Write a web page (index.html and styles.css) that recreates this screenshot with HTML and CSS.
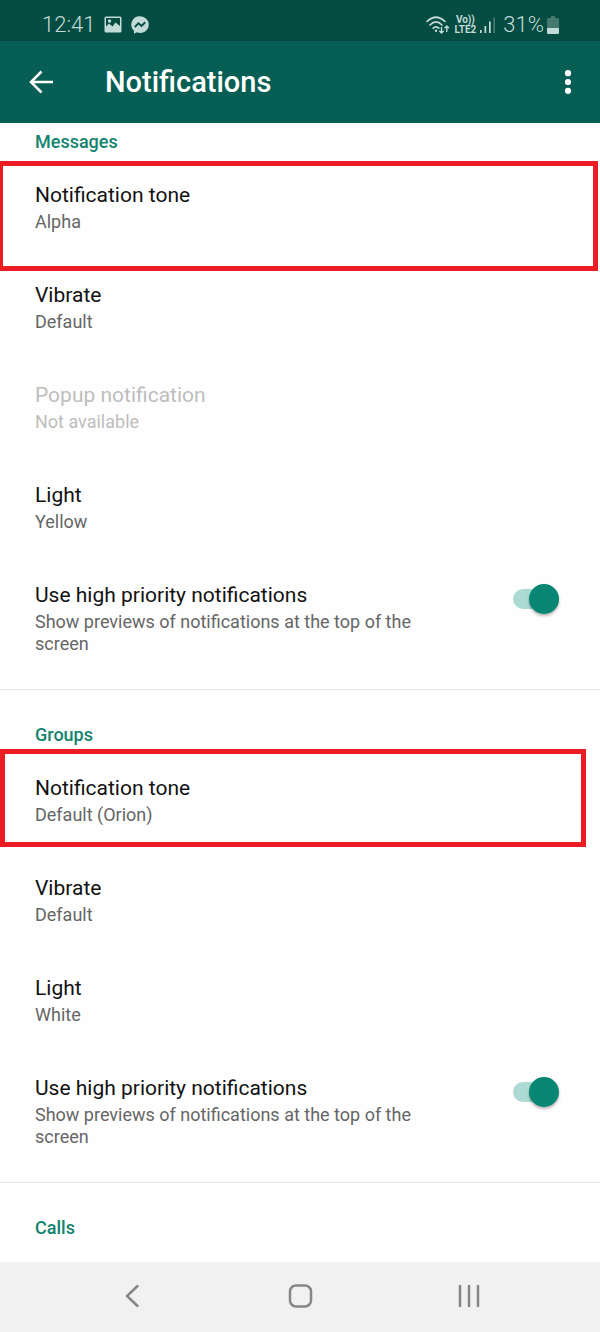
FILE: index.html
```html
<!DOCTYPE html>
<html lang="en">
<head>
    <meta charset="UTF-8">
    <meta name="viewport" content="width=device-width, initial-scale=1.0">
    <title>Notifications</title>
    <link rel="stylesheet" href="styles.css">
</head>
<body>
    <div class="status-bar">
        <div class="status-left">
            <span class="status-text">12:41</span>
            <svg width="18" height="18" viewBox="0 0 18 18" aria-hidden="true">
                <path fill="#c3dbd7" fill-rule="evenodd" d="M2 0.5h14q1.500 0 1.500 1.500v13q0 1.500-1.500 1.500H2Q.5 16.500.5 15V2Q.5.5 2 .5zM2 2v8.500l3-3 3.500 3 3-4L16 10V2z"/>
                <circle cx="5.500" cy="5" r="1.700" fill="#c3dbd7"/>
            </svg>
            <svg width="18" height="18" viewBox="0 0 18 18" aria-hidden="true">
                <path fill="#c3dbd7" d="M9 .3a8.700 8.300 0 1 1-3.200 16L3 17.700V15A8.500 8.500 0 0 1 9 .3z"/>
                <path fill="none" stroke="#054c42" stroke-width="1.900" d="M3.800 11l3.700-3.800 3 2.700 3.700-3.600"/>
            </svg>
        </div>
        <div class="status-right">
            <svg width="24" height="20" viewBox="0 0 24 20" fill="none" stroke="#c3dbd7" stroke-width="1.700" stroke-linecap="round" aria-hidden="true">
                <path d="M1 6.500q9-8.500 18 0M4 10q6-6 12 0M7.200 13.200q2.800-2.700 5.600 0"/>
                <circle cx="10" cy="15.800" r="1.200" fill="#c3dbd7" stroke="none"/>
                <path stroke-width="1.400" d="M15.500 12.500v5.500M13.700 16.300l1.800 1.800 1.800-1.800M20.800 16.500v-5.500M19 12.700l1.800-1.800 1.800 1.800"/>
            </svg>
            <span class="network"><span>Vo))</span><span>LTE2</span></span>
            <svg width="16" height="18" viewBox="0 0 16 18" fill="#c3dbd7" aria-hidden="true">
                <path d="M0 14h1.700v3H0zM4.500 10h1.700v7H4.500zM9 5.500h1.700V17H9z"/>
                <path fill="#44796f" d="M13.300 1.500H15V17h-1.700z"/>
            </svg>
            <span class="status-text battery-level">31%</span>
            <svg width="12" height="18" viewBox="0 0 12 18" aria-hidden="true">
                <path fill="#44796f" d="M4 0h4v2h2.500Q12 2 12 3.500V12H0V3.500Q0 2 1.500 2H4z"/>
                <path fill="#c3dbd7" d="M0 12h12v4.500q0 1.500-1.500 1.500h-9Q0 18 0 16.500z"/>
            </svg>
        </div>
    </div>

    <header class="app-bar">
        <button class="icon-button" type="button" aria-label="Back">
            <svg width="24" height="24" viewBox="0 0 24 24" fill="none" stroke="#fff" stroke-width="2.500" aria-hidden="true">
                <path d="M24 12H2M12.500 1.500L2 12l10.500 10.500"/>
            </svg>
        </button>
        <h1>Notifications</h1>
        <button class="icon-button" type="button" aria-label="More options">
            <svg width="24" height="24" viewBox="0 0 24 24" fill="#fff" aria-hidden="true">
                <circle cx="12" cy="3.200" r="3.100"/>
                <circle cx="12" cy="12" r="3.100"/>
                <circle cx="12" cy="20.800" r="3.100"/>
            </svg>
        </button>
    </header>

    <main>
        <section>
            <h2>Messages</h2>
            <div class="row highlight highlight-messages">
                <div class="row-text">
                    <h3>Notification tone</h3>
                    <p>Alpha</p>
                </div>
            </div>
            <div class="row">
                <div class="row-text">
                    <h3>Vibrate</h3>
                    <p>Default</p>
                </div>
            </div>
            <div class="row disabled">
                <div class="row-text">
                    <h3>Popup notification</h3>
                    <p>Not available</p>
                </div>
            </div>
            <div class="row">
                <div class="row-text">
                    <h3>Light</h3>
                    <p>Yellow</p>
                </div>
            </div>
            <div class="row">
                <label class="row-text" for="messagesPriority">
                    <span class="row-title">Use high priority notifications</span>
                    <span class="row-summary">Show previews of notifications at the top of the screen</span>
                </label>
                <input class="switch" type="checkbox" id="messagesPriority" checked>
            </div>
        </section>

        <section>
            <h2>Groups</h2>
            <div class="row highlight highlight-groups">
                <div class="row-text">
                    <h3>Notification tone</h3>
                    <p>Default (Orion)</p>
                </div>
            </div>
            <div class="row">
                <div class="row-text">
                    <h3>Vibrate</h3>
                    <p>Default</p>
                </div>
            </div>
            <div class="row">
                <div class="row-text">
                    <h3>Light</h3>
                    <p>White</p>
                </div>
            </div>
            <div class="row">
                <label class="row-text" for="groupsPriority">
                    <span class="row-title">Use high priority notifications</span>
                    <span class="row-summary">Show previews of notifications at the top of the screen</span>
                </label>
                <input class="switch" type="checkbox" id="groupsPriority" checked>
            </div>
        </section>

        <section>
            <h2>Calls</h2>
        </section>
    </main>

    <nav class="nav-bar">
        <button type="button" aria-label="Back">
            <svg width="26" height="26" viewBox="0 0 26 26" aria-hidden="true">
                <path d="M18.500 3L8 13l10.500 10"/>
            </svg>
        </button>
        <button type="button" aria-label="Home">
            <svg width="26" height="26" viewBox="0 0 26 26" aria-hidden="true">
                <rect x="3" y="2.500" width="21" height="21" rx="6"/>
            </svg>
        </button>
        <button type="button" aria-label="Recent apps">
            <svg width="26" height="26" viewBox="0 0 26 26" aria-hidden="true">
                <path d="M5 3v20M14 3v20M23 3v20"/>
            </svg>
        </button>
    </nav>
</body>
</html>
```
FILE: styles.css
```css
* {
    box-sizing: border-box;
}

body {
    display: flex;
    flex-direction: column;
    min-height: 100vh;
    margin: 0;
    background-color: #fefefe;
    font-family: Roboto, sans-serif;
    color: #121212;
}

h1, h2, h3, p {
    margin: 0;
    font-weight: 400;
}

button {
    padding: 0;
    border: none;
    background: none;
    cursor: pointer;
}

svg {
    display: block;
    flex: none;
}

/* Status bar */

.status-bar {
    display: flex;
    justify-content: space-between;
    height: 41px;
    padding: 8px 41px 0 42px;
    background-color: #054c42;
    color: #c3dbd7;
}

.status-left,
.status-right {
    display: flex;
    align-items: center;
}

.status-left {
    gap: 9px;
}

.status-right {
    gap: 3px;
}

.status-text {
    font-size: 22px;
    font-weight: 300;
    line-height: 24px;
}

.battery-level {
    padding-left: 4px;
}

.network {
    display: flex;
    flex-direction: column;
    align-items: center;
    padding: 0 1px;
    font-size: 10px;
    font-weight: 700;
    line-height: 10px;
}

/* App bar */

.app-bar {
    display: flex;
    align-items: center;
    height: 82px;
    padding: 0 20px 0 29px;
    background-color: #075e54;
}

.icon-button {
    flex: none;
}

.app-bar h1 {
    flex: 1;
    padding-left: 52px;
    color: #fff;
    font-size: 29px;
    font-weight: 500;
    line-height: 36px;
}

/* Settings list */

main {
    flex: 1;
}

section {
    padding: 34px 0 9px;
    border-top: 1px solid #e4e4e4;
}

section:first-child {
    padding-top: 8px;
    border-top: none;
}

section:last-child {
    padding-bottom: 0;
}

h2 {
    padding: 0 35px 5px;
    color: #12836c;
    font-size: 18px;
    font-weight: 500;
    line-height: 22px;
}

.row {
    display: flex;
    align-items: flex-start;
    gap: 48px;
    padding: 24px 41px 25px 35px;
}

.row-text {
    display: flex;
    flex: 1;
    flex-direction: column;
    gap: 3px;
}

.row h3,
.row-title {
    font-size: 21px;
    line-height: 26px;
}

.row p,
.row-summary {
    color: #666;
    font-size: 18px;
    line-height: 22px;
}

.row.disabled h3,
.row.disabled p {
    color: #bdbdbd;
}

/* Red frames drawn over the tone rows */

.highlight {
    position: relative;
}

.highlight::after {
    content: "";
    position: absolute;
    left: 0;
    border: 5px solid #ec1c24;
}

.highlight-messages::after {
    top: 3px;
    right: 2px;
    bottom: -13px;
    border-left-width: 3px;
}

.highlight-groups::after {
    top: -2px;
    right: 14px;
    bottom: 4px;
}

/* Switch */

.switch {
    appearance: none;
    display: flex;
    flex: none;
    align-items: center;
    width: 46px;
    height: 20px;
    margin: 7px 0 0;
    background-color: #addbd3;
    border-radius: 10px;
    cursor: pointer;
}

.switch::before {
    content: "";
    flex: none;
    width: 30px;
    height: 30px;
    border-radius: 50%;
    background-color: #078673;
    box-shadow: 0 2px 3px rgba(0, 0, 0, 0.3);
}

.switch:checked {
    justify-content: flex-end;
}

/* System navigation */

.nav-bar {
    display: flex;
    height: 70px;
    padding: 0 8% 2px;
    background-color: #f1f1f1;
}

.nav-bar button {
    display: flex;
    flex: 1;
    align-items: center;
    justify-content: center;
}

.nav-bar svg {
    fill: none;
    stroke: #868686;
    stroke-width: 2.5;
    stroke-linecap: round;
}
```
